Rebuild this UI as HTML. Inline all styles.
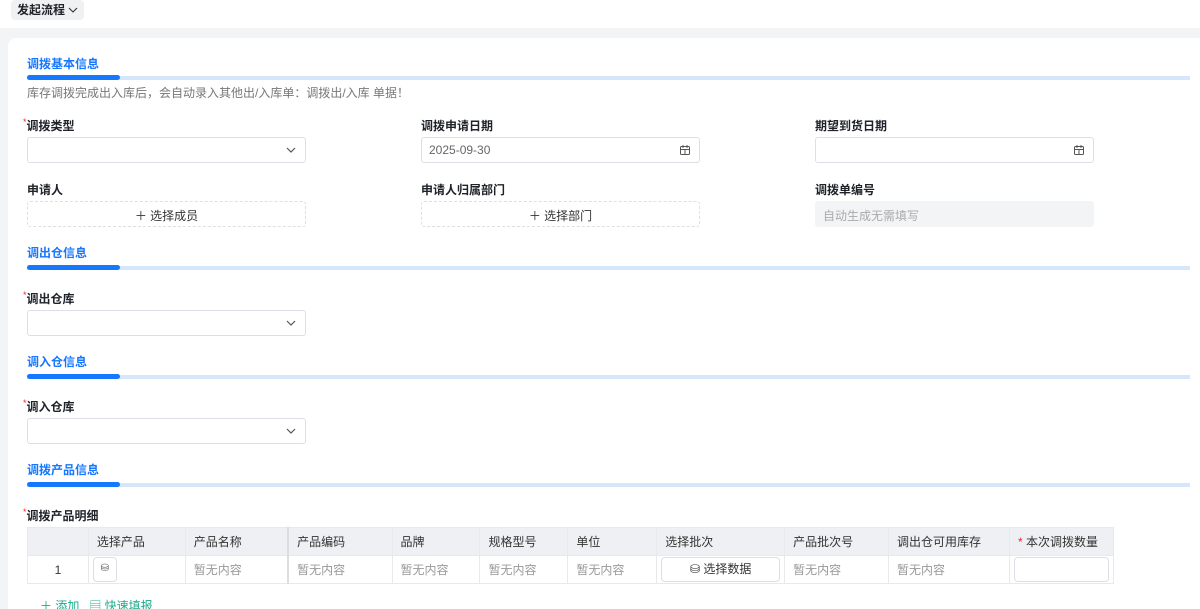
<!DOCTYPE html><html><head><meta charset="utf-8"><style>
*{box-sizing:border-box;margin:0;padding:0}
html{width:1200px;height:609px;overflow:hidden}
body{width:1200px;height:609px;overflow:hidden;background:#f3f4f6;font-family:"Liberation Sans","Noto Sans CJK SC",sans-serif;font-size:12px;color:#1f2329;position:relative}
.a{position:absolute;white-space:nowrap}
.top{left:0;top:0;width:1200px;height:28px;background:#fff}
.tag{left:11px;top:0;height:20px;background:#f0f1f3;border-radius:4px;font-size:12px;font-weight:bold;padding:2px 6px;color:#1f2329;line-height:16px}
.card{left:8px;top:38px;width:1200px;height:600px;background:#fff;border-radius:8px}
.sec{font-weight:bold;color:#1677ff;font-size:12px}
.bar{height:4px;background:#d6e6fb;left:27px;width:1163px}
.bar i{position:absolute;left:0;top:-1px;width:93px;height:5px;background:#1677ff;border-radius:3px}
.lbl{font-weight:bold;font-size:12px}
.lbl b{color:#f5222d;font-size:9px;font-weight:normal;vertical-align:top}
.inp{height:26px;width:279px;border:1px solid #dcdfe6;border-radius:3px;background:#fff;font-size:12px;padding:5px 7px;color:#666}
.dash{border-style:dashed;text-align:center;color:#333}
.dis{background:#f3f4f6;border-color:#f3f4f6;color:#aaa}
.chev{position:absolute;right:8px;top:6px}
table{border-collapse:collapse;position:absolute;left:27px;top:527px;width:1087px;font-size:12px}
td{border:1px solid #e8e9eb;height:28px;padding:0 8px;color:#999;white-space:nowrap}
tr.h td{background:#eef0f3;color:#333}
.btn{border:1px solid #dcdfe6;border-radius:4px;height:25px;background:#fff}
</style></head><body>
<div class="a top"></div>
<div class="a tag">发起流程 <svg width="10" height="8" viewBox="0 0 10 8"><path d="M1 2l4 4 4-4" fill="none" stroke="#333" stroke-width="1.1"/></svg></div>
<div class="a card"></div>

<div class="a sec" style="left:27px;top:55px">调拨基本信息</div>
<div class="a bar" style="top:76px"><i></i></div>
<div class="a" style="left:27px;top:84px;color:#777">库存调拨完成出入库后，会自动录入其他出/入库单：调拨出/入库 单据！</div>

<div class="a lbl" style="left:23px;top:117px"><b>*</b>调拨类型</div>
<div class="a inp" style="left:27px;top:137px"><svg class="chev" width="12" height="12" viewBox="0 0 12 12"><path d="M2 4l4 4 4-4" fill="none" stroke="#555" stroke-width="1.2"/></svg></div>
<div class="a lbl" style="left:421px;top:117px">调拨申请日期</div>
<div class="a inp" style="left:421px;top:137px">2025-09-30<svg class="chev" width="12" height="12" viewBox="0 0 12 12"><rect x="1.5" y="2.5" width="9" height="8" rx="1" fill="none" stroke="#555"/><path d="M1.5 5.5h9M4 1v3M8 1v3M6 5.5v5" stroke="#555" fill="none"/></svg></div>
<div class="a lbl" style="left:815px;top:117px">期望到货日期</div>
<div class="a inp" style="left:815px;top:137px"><svg class="chev" width="12" height="12" viewBox="0 0 12 12"><rect x="1.5" y="2.5" width="9" height="8" rx="1" fill="none" stroke="#555"/><path d="M1.5 5.5h9M4 1v3M8 1v3M6 5.5v5" stroke="#555" fill="none"/></svg></div>

<div class="a lbl" style="left:27px;top:181px">申请人</div>
<div class="a inp dash" style="left:27px;top:201px">＋ 选择成员</div>
<div class="a lbl" style="left:421px;top:181px">申请人归属部门</div>
<div class="a inp dash" style="left:421px;top:201px">＋ 选择部门</div>
<div class="a lbl" style="left:815px;top:181px">调拨单编号</div>
<div class="a inp dis" style="left:815px;top:201px">自动生成无需填写</div>

<div class="a sec" style="left:27px;top:244px">调出仓信息</div>
<div class="a bar" style="top:266px"><i></i></div>
<div class="a lbl" style="left:23px;top:290px"><b>*</b>调出仓库</div>
<div class="a inp" style="left:27px;top:310px"><svg class="chev" width="12" height="12" viewBox="0 0 12 12"><path d="M2 4l4 4 4-4" fill="none" stroke="#555" stroke-width="1.2"/></svg></div>

<div class="a sec" style="left:27px;top:353px">调入仓信息</div>
<div class="a bar" style="top:375px"><i></i></div>
<div class="a lbl" style="left:23px;top:398px"><b>*</b>调入仓库</div>
<div class="a inp" style="left:27px;top:418px"><svg class="chev" width="12" height="12" viewBox="0 0 12 12"><path d="M2 4l4 4 4-4" fill="none" stroke="#555" stroke-width="1.2"/></svg></div>

<div class="a sec" style="left:27px;top:461px">调拨产品信息</div>
<div class="a bar" style="top:483px"><i></i></div>
<div class="a lbl" style="left:23px;top:507px"><b>*</b>调拨产品明细</div>

<table>
<colgroup><col style="width:61px"><col style="width:97px"><col style="width:103px"><col style="width:104px"><col style="width:88px"><col style="width:88px"><col style="width:89px"><col style="width:128px"><col style="width:104px"><col style="width:121px"><col style="width:104px"></colgroup>
<tr class="h"><td></td><td>选择产品</td><td style="border-right:2px solid #ddd">产品名称</td><td>产品编码</td><td>品牌</td><td>规格型号</td><td>单位</td><td>选择批次</td><td>产品批次号</td><td>调出仓可用库存</td><td><span style="color:#f5222d">*</span> 本次调拨数量</td></tr>
<tr><td style="text-align:center;color:#333">1</td><td style="padding:0 4px"><div class="btn" style="width:24px;text-align:center;line-height:22px;color:#555;font-size:10px">⛁</div></td><td style="border-right:2px solid #ddd">暂无内容</td><td>暂无内容</td><td>暂无内容</td><td>暂无内容</td><td>暂无内容</td><td style="padding:0 4px"><div class="btn" style="text-align:center;line-height:23px;color:#333">⛁ 选择数据</div></td><td>暂无内容</td><td>暂无内容</td><td style="padding:0 4px"><div class="btn"></div></td></tr>
</table>
<div class="a" style="left:40px;top:597px;color:#1aab8a">＋ 添加 &nbsp; ▤ 快速填报</div>
</body></html>
